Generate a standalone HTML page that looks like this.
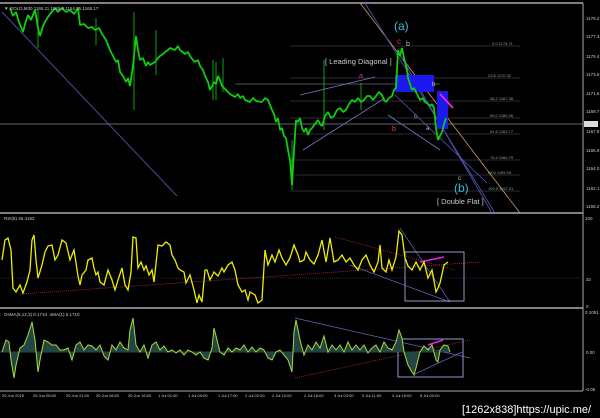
<!DOCTYPE html>
<html><head><style>
html,body{margin:0;padding:0;background:#000;width:600px;height:418px;overflow:hidden}
svg{display:block}
text{font-family:"Liberation Sans",sans-serif}
</style></head><body>
<svg width="600" height="418" viewBox="0 0 600 418" xmlns="http://www.w3.org/2000/svg">
<rect width="600" height="418" fill="#000"/>
<line x1="0" y1="3" x2="583" y2="3" stroke="#aaa" stroke-width="1.5"/>
<line x1="0" y1="213" x2="583" y2="213" stroke="#aaa" stroke-width="1.5"/>
<line x1="0" y1="308" x2="583" y2="308" stroke="#aaa" stroke-width="1.5"/>
<line x1="0" y1="391" x2="583" y2="391" stroke="#aaa" stroke-width="1"/>
<line x1="583" y1="3" x2="583" y2="391" stroke="#aaa" stroke-width="1"/>
<line x1="2" y1="12" x2="177" y2="196" stroke="#4a4a99" stroke-width="1"/>
<line x1="0" y1="124" x2="583" y2="124" stroke="#888" stroke-width="0.7"/>
<line x1="235" y1="84" x2="440" y2="84" stroke="#667" stroke-width="0.7"/>
<g stroke="#556" stroke-width="0.6">
<line x1="290" y1="46" x2="520" y2="46"/><line x1="290" y1="78" x2="520" y2="78"/>
<line x1="290" y1="101" x2="520" y2="101"/><line x1="290" y1="118" x2="520" y2="118"/>
<line x1="290" y1="134" x2="520" y2="134"/><line x1="290" y1="160" x2="520" y2="160"/>
<line x1="290" y1="175" x2="520" y2="175"/><line x1="290" y1="191" x2="520" y2="191"/>
</g>
<g fill="#8a8" font-size="4">
<text x="492" y="45">0.0 1174.71</text><text x="488" y="77">23.6 1170.32</text>
<text x="490" y="100">38.2 1167.36</text><text x="490" y="117">50.0 1165.06</text>
<text x="490" y="133">61.8 1163.77</text><text x="490" y="159">76.4 1160.79</text>
<text x="488" y="174">88.6 1159.03</text><text x="488" y="190">100.0 1157.01</text>
</g>
<line x1="360" y1="3" x2="520" y2="213" stroke="#c96" stroke-width="0.8"/>
<line x1="365" y1="3" x2="495" y2="213" stroke="#55b" stroke-width="0.8"/>
<line x1="400" y1="55" x2="492" y2="213" stroke="#55b" stroke-width="0.8"/>
<line x1="395" y1="95" x2="487" y2="183" stroke="#55b" stroke-width="0.8"/>
<line x1="300" y1="95" x2="375" y2="77" stroke="#77c" stroke-width="0.8"/>
<line x1="303" y1="150" x2="385" y2="98" stroke="#77c" stroke-width="0.8"/>
<line x1="388" y1="115" x2="440" y2="150" stroke="#77c" stroke-width="0.8"/>
<rect x="395" y="75" width="39" height="17" fill="#1a1aee"/>
<rect x="437" y="91" width="11" height="38" fill="#1a1aee"/>
<line x1="440" y1="94" x2="453" y2="108" stroke="#e2e" stroke-width="2"/>
<polyline fill="none" stroke="#1c1" stroke-width="1.8" stroke-linejoin="bevel" points="10,8 13,16 16,12 19,22 23,32 25,24 28,15 31,20 35,10 38,28 40,36 43,26 46,20 50,14 55,8 58,12 62,8 66,12 70,10 74,14 78,8 80,25 84,24 88,28 92,27 95,30 99,28 102,34 106,40 110,50 113,56 116,62 118,60 120,72 123,76 126,82 128,78 130,86 133,66 136,36 138,50 140,60 143,58 146,66 148,62 150,65 155,62 158,58 160,56 163,54 165,52 168,50 170,48 175,50 178,46 180,50 185,54 188,52 190,56 193,60 195,62 198,60 200,66 203,70 205,76 208,82 210,90 214,82 216,84 218,76 220,80 222,86 226,90 230,94 235,97 238,94 240,98 243,96 245,100 250,102 253,98 256,101 262,102 265,98 268,100 272,110 274,114 276,122 278,118 280,130 282,128 284,136 286,138 288,150 290,160 292,185 294,150 296,120 298,122 300,118 302,128 304,132 306,128 308,135 310,130 312,128 315,124 318,120 320,124 322,126 325,116 328,112 331,118 334,116 337,110 340,108 343,112 346,110 349,104 352,100 355,102 358,98 361,102 364,100 367,96 370,96 373,100 376,96 379,92 382,95 384,100 386,102 389,98 392,96 394,90 396,88 398,50 400,56 402,48 404,58 405,62 407,70 408,78 410,84 412,90 414,88 416,92 418,96 420,100 423,98 425,102 428,104 430,106 432,104 434,108 436,128 438,140 440,136 442,132 444,124 446,118"/>
<g stroke="#1c1" stroke-width="0.8">
<line x1="134" y1="12" x2="134" y2="110"/><line x1="156" y1="30" x2="156" y2="75"/>
<line x1="213" y1="60" x2="213" y2="100"/><line x1="223" y1="58" x2="223" y2="92"/>
<line x1="324" y1="60" x2="324" y2="130"/><line x1="361" y1="83" x2="361" y2="110"/>
<line x1="38" y1="10" x2="38" y2="48"/><line x1="96" y1="18" x2="96" y2="45"/>
<line x1="292" y1="140" x2="292" y2="190"/><line x1="216" y1="62" x2="216" y2="100"/>
</g>
<text x="394" y="30" fill="#3bd" font-size="12">(a)</text>
<text x="397" y="44" fill="#e37" font-size="8">c</text>
<text x="406" y="46" fill="#bbb" font-size="7">b</text>
<text x="325" y="64" fill="#ccc" font-size="7.5">[ Leading Diagonal ]</text>
<text x="359" y="78" fill="#e37" font-size="7">a</text>
<text x="392" y="131" fill="#e37" font-size="7">b</text>
<text x="414" y="118" fill="#bbb" font-size="6">c</text>
<text x="426" y="130" fill="#bbb" font-size="6">a</text>
<text x="432" y="86" fill="#ccc" font-size="6">b</text>
<text x="458" y="180" fill="#bbb" font-size="6">c</text>
<text x="454" y="192" fill="#3bd" font-size="12">(b)</text>
<text x="437" y="204" fill="#ccc" font-size="7.5">[ Double Flat ]</text>
<text x="4" y="10" fill="#ccc" font-size="4.5">▼ GOLD,M30 1165.11 1165.8 1164.75 1165.17</text>
<g fill="#ccc" font-size="4.5">
<text x="586" y="20">1179.2</text><text x="586" y="38">1177.3</text><text x="586" y="58">1175.4</text>
<text x="586" y="76">1173.5</text><text x="586" y="95">1171.6</text><text x="586" y="113">1169.7</text>
<text x="586" y="133">1167.8</text><text x="586" y="152">1165.9</text><text x="586" y="170">1164.0</text>
<text x="586" y="190">1162.1</text><text x="586" y="208">1158.2</text>
</g>
<rect x="584" y="121" width="14" height="6" fill="#ddd"/>
<text x="4" y="220" fill="#ccc" font-size="4.5">RSI(8) 45.4162</text>
<line x1="0" y1="278" x2="583" y2="278" stroke="#557" stroke-dasharray="1,1" stroke-width="0.6"/>
<line x1="20" y1="294" x2="480" y2="262" stroke="#b33" stroke-dasharray="1,1" stroke-width="0.7"/>
<line x1="335" y1="237" x2="455" y2="270" stroke="#b33" stroke-dasharray="1,1" stroke-width="0.7"/>
<line x1="350" y1="265" x2="450" y2="302" stroke="#66b" stroke-width="0.7"/>
<line x1="400" y1="228" x2="450" y2="302" stroke="#66b" stroke-width="0.7"/>
<rect x="405" y="252" width="59" height="49" fill="none" stroke="#99c" stroke-width="1"/>
<line x1="420" y1="262" x2="444" y2="257" stroke="#e2e" stroke-width="1.5"/>
<polyline fill="none" stroke="#ee0" stroke-width="1.3" points="2,260 5,240 8,238 11,250 13,288 16,292 20,285 23,293 27,282 30,270 32,240 34,235 36,260 38,278 42,265 45,252 48,246 52,245 55,260 58,255 62,240 66,243 70,260 74,250 78,276 80,285 82,275 86,270 88,260 92,258 94,268 96,275 98,272 100,282 104,285 108,270 112,280 115,290 118,280 122,268 125,285 128,290 131,272 133,237 136,238 138,268 141,262 144,270 146,266 149,275 152,270 154,282 158,245 162,246 166,242 170,245 172,255 175,260 178,268 180,270 184,272 186,283 190,275 194,290 197,303 199,295 202,302 205,270 207,270 210,280 214,272 218,276 222,268 224,272 228,265 232,262 235,270 238,285 242,292 245,290 248,300 250,292 255,295 258,303 262,300 265,250 268,265 272,255 275,262 279,250 282,258 286,265 290,258 294,245 298,255 300,262 304,260 306,252 310,260 314,264 318,255 322,240 326,262 330,238 334,262 338,260 342,255 346,262 350,258 354,265 358,270 362,260 366,255 370,265 374,272 378,262 380,245 382,268 386,272 389,260 392,270 396,257 399,231 402,235 405,258 408,266 412,270 416,262 420,270 424,262 428,278 432,270 436,292 438,288 440,283 444,265 448,262"/>
<g fill="#ccc" font-size="4.5"><text x="585" y="220">100</text><text x="586" y="281">32</text><text x="586" y="308">0</text></g>
<text x="4" y="316" fill="#ccc" font-size="4.5">OsMA(5,12,3) 0.1710  ·oMA(1) 0.1710</text>
<line x1="0" y1="352" x2="450" y2="352" stroke="#688" stroke-width="0.5"/>
<line x1="295" y1="318" x2="470" y2="358" stroke="#66b" stroke-width="0.7"/>
<line x1="295" y1="378" x2="470" y2="340" stroke="#b33" stroke-dasharray="1,1" stroke-width="0.7"/>
<line x1="415" y1="374" x2="462" y2="352" stroke="#66b" stroke-width="0.7"/>
<rect x="398" y="339" width="65" height="38" fill="none" stroke="#99c" stroke-width="1"/>
<line x1="428" y1="345" x2="443" y2="340" stroke="#e2e" stroke-width="1.5"/>
<polyline fill="#244" stroke="#ad3" stroke-width="1" points="2,352 6,340 9,342 11,360 14,378 16,365 20,348 24,345 28,335 32,322 35,340 38,372 40,360 44,340 48,342 52,345 56,345 60,350 64,350 68,348 72,360 76,345 80,342 84,350 88,345 92,346 96,350 100,345 104,356 108,360 112,345 116,350 120,342 124,348 128,350 130,330 133,318 136,345 140,352 144,345 148,358 152,345 156,342 160,350 164,346 168,352 172,350 176,353 180,350 184,355 188,350 192,352 196,355 200,352 204,358 208,360 212,348 214,328 217,340 220,352 224,355 228,348 232,352 236,348 240,350 244,345 248,352 252,347 256,352 260,348 264,350 268,358 272,360 276,352 280,350 284,355 288,360 292,372 294,332 296,320 300,340 304,355 308,345 312,350 316,342 320,348 324,336 328,352 332,345 336,350 340,345 344,352 348,342 352,350 356,345 360,350 364,345 368,353 372,348 376,345 380,352 384,342 388,348 392,350 396,342 399,330 402,338 404,352 408,365 412,372 414,375 416,368 420,352 424,346 428,350 432,345 436,360 438,362 440,350 444,345 448,346 450,352"/>
<g fill="#ccc" font-size="4.5"><text x="585" y="314">0.1051</text><text x="586" y="354">0.00</text><text x="585" y="391">-0.06</text></g>
<g fill="#ccc" font-size="4"><text x="2" y="397">29 Jun 2015</text><text x="33" y="397">29 Jun 05:00</text><text x="66" y="397">29 Jun 21:00</text><text x="96" y="397">30 Jun 08:00</text><text x="128" y="397">30 Jun 16:00</text><text x="158" y="397">1 Jul 01:00</text><text x="188" y="397">1 Jul 09:00</text><text x="218" y="397">1 Jul 17:00</text><text x="245" y="397">2 Jul 02:00</text><text x="272" y="397">2 Jul 10:00</text><text x="304" y="397">2 Jul 18:00</text><text x="334" y="397">3 Jul 03:00</text><text x="362" y="397">3 Jul 11:00</text><text x="392" y="397">3 Jul 19:00</text><text x="420" y="397">6 Jul 00:00</text></g>
<text x="462" y="413" fill="#fff" font-size="11" font-family="Liberation Mono,monospace">[1262x838]https://upic.me/</text>
</svg>
</body></html>
